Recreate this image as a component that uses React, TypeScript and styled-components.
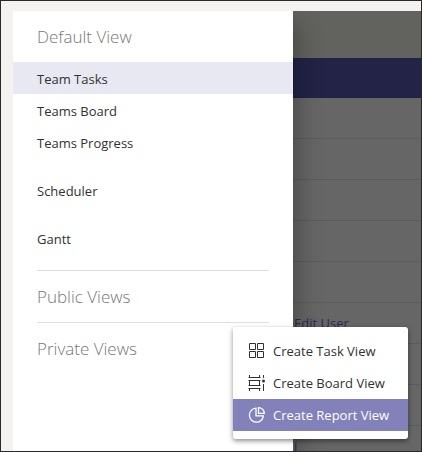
import React from "react";
import styled, { createGlobalStyle } from "styled-components";

const GlobalStyle = createGlobalStyle`
  *, *::before, *::after { box-sizing: border-box; }
  body { margin: 0; font-family: "Open Sans", "Noto Sans", sans-serif; font-size: 13px; line-height: 20px; color: #323130; }
  button { font: inherit; color: inherit; border: 0; background: none; cursor: pointer; }
`;

const Frame = styled.div`
  display: flex;
  height: 100vh;
  padding: 10px 0 0 12px;
  border: 1px solid #2a2829;
  background: #f3f2f1;
  overflow: hidden;
  position: relative;
`;

const Drawer = styled.nav`
  flex: 0 0 280px;
  background: #fff;
  box-shadow: 4px 12px 24px rgba(0, 0, 0, 0.3);
  clip-path: inset(0 -40px 0 0);
  z-index: 1;
`;

const SectionTitle = styled.h2<{ $ruled?: boolean }>`
  display: flex;
  align-items: center;
  height: ${(p) => (p.$ruled ? 52 : 51)}px;
  margin: 0 24px;
  border-top: ${(p) => (p.$ruled ? "1px solid #dedede" : "0")};
  font-size: 17px;
  font-weight: 300;
  color: #777;
`;

const ViewGroup = styled.div`
  margin-bottom: 16px;
`;

const ViewItem = styled.button<{ $active?: boolean }>`
  display: flex;
  align-items: center;
  width: 100%;
  height: 32px;
  padding: 2px 24px 0;
  background: ${(p) => (p.$active ? "#e8e8f2" : "transparent")};
`;

const Page = styled.main`
  flex: 1;
  min-width: 0;
  background: #666;
`;

const TopBar = styled.header`
  height: 47px;
  background: #62625f;
`;

const CommandBar = styled.div`
  height: 40px;
  background: #232347;
`;

const Row = styled.div`
  display: flex;
  align-items: center;
  height: 41px;
  padding-left: 1px;
  border-bottom: 1px solid #5c5c5c;
  white-space: nowrap;
`;

const RowLink = styled.a`
  color: #2b2a55;
  text-decoration: none;
`;

const Menu = styled.div`
  position: absolute;
  right: 13px;
  bottom: 12px;
  width: 175px;
  padding: 8px 0;
  border-radius: 3px;
  background: #fff;
  box-shadow: 0 2px 5px rgba(0, 0, 0, 0.45);
  z-index: 2;
`;

const MenuItem = styled.button<{ $active?: boolean }>`
  display: flex;
  align-items: center;
  gap: 8px;
  width: 100%;
  height: 32px;
  padding: 0 15px;
  white-space: nowrap;
  background: ${(p) => (p.$active ? "#8281b9" : "transparent")};
  color: ${(p) => (p.$active ? "#fff" : "#323130")};
  font-weight: ${(p) => (p.$active ? 500 : 400)};
`;

const Icon = styled.svg`
  flex: none;
  width: 17px;
  height: 16px;
  fill: none;
  stroke: currentColor;
`;

const TaskIcon = () => (
  <Icon viewBox="0 0 17 16" aria-hidden="true">
    <path d="M1.5 .5h6v6h-6zM9.5 .5h6v6h-6zM1.5 8.5h6v6h-6zM9.5 8.5h6v6h-6z" />
  </Icon>
);

const BoardIcon = () => (
  <Icon viewBox="0 0 17 16" aria-hidden="true">
    <path d="M.5 2.5h12M.5 13.5h12M1.5 0v2.5M11.5 0v2.5M1.5 13.5V16M11.5 13.5V16M.5 5.5h12M.5 10.5h12M1.5 5.5v5M11.5 5.500v5M15.500 0v3M15.500 9v7" />
    <circle cx="15.5" cy="6" r="1.5" fill="currentColor" stroke="none" />
  </Icon>
);

const ReportIcon = () => (
  <Icon viewBox="0 0 17 16" aria-hidden="true">
    <path strokeWidth="1.3" d="M8 1.200A7 7 0 1 0 15.400 8.800H8zM10.500 .7v5.600h5.800a5.800 5.800 0 0 0-5.800-5.600z" />
  </Icon>
);

const groups = [["Team Tasks", "Teams Board", "Teams Progress"], ["Scheduler"], ["Gantt"]];
const rows = ["", "", "", "", "", "Edit User", "", "", "i"];
const actions = [
  { label: "Create Task View", Glyph: TaskIcon },
  { label: "Create Board View", Glyph: BoardIcon },
  { label: "Create Report View", Glyph: ReportIcon },
];

export default function App() {
  return (
    <>
      <GlobalStyle />
      <Frame>
        <Drawer aria-label="Views">
          <SectionTitle>Default View</SectionTitle>
          {groups.map((group) => (
            <ViewGroup key={group[0]}>
              {group.map((name) => (
                <ViewItem key={name} type="button" $active={name === "Team Tasks"}>
                  {name}
                </ViewItem>
              ))}
            </ViewGroup>
          ))}
          <SectionTitle $ruled>Public Views</SectionTitle>
          <SectionTitle $ruled>Private Views</SectionTitle>
        </Drawer>
        <Page>
          <TopBar />
          <CommandBar />
          {rows.map((text, i) => (
            <Row key={i}>{text && <RowLink href="#">{text}</RowLink>}</Row>
          ))}
        </Page>
        <Menu role="menu">
          {actions.map(({ label, Glyph }) => (
            <MenuItem key={label} type="button" role="menuitem" $active={label === "Create Report View"}>
              <Glyph />
              {label}
            </MenuItem>
          ))}
        </Menu>
      </Frame>
    </>
  );
}
